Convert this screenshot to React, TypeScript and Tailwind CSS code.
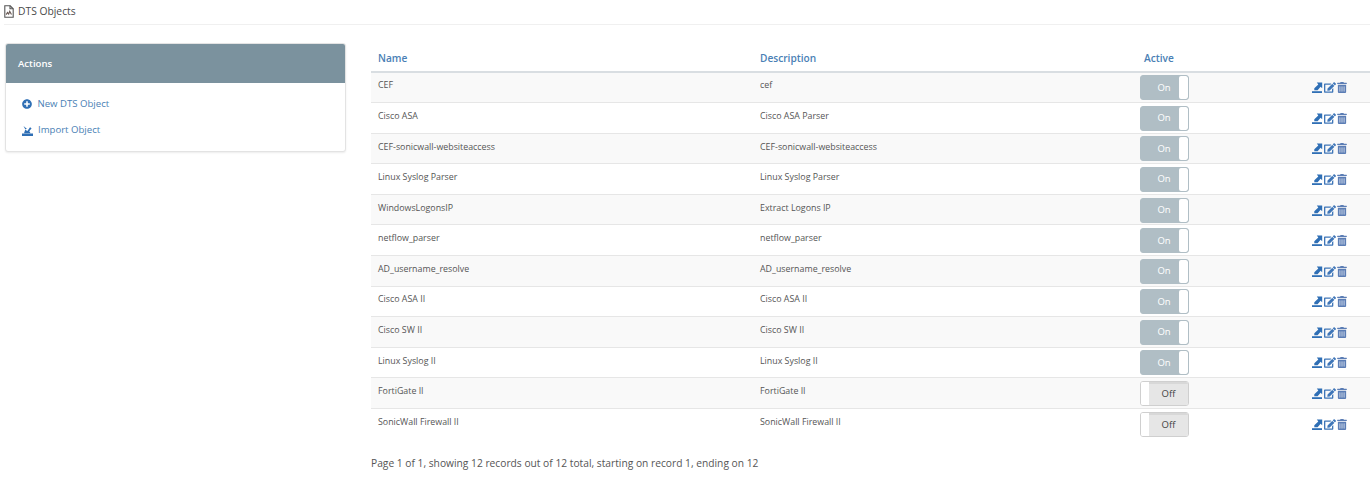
import React from "react";
import { FaPlusCircle, FaEdit, FaTrashAlt } from "react-icons/fa";

const rows: [string, string, boolean][] = [
  ["CEF", "cef", true],
  ["Cisco ASA", "Cisco ASA Parser", true],
  ["CEF-sonicwall-websiteaccess", "CEF-sonicwall-websiteaccess", true],
  ["Linux Syslog Parser", "Linux Syslog Parser", true],
  ["WindowsLogonsIP", "Extract Logons IP", true],
  ["netflow_parser", "netflow_parser", true],
  ["AD_username_resolve", "AD_username_resolve", true],
  ["Cisco ASA II", "Cisco ASA II", true],
  ["Cisco SW II", "Cisco SW II", true],
  ["Linux Syslog II", "Linux Syslog II", true],
  ["FortiGate II", "FortiGate II", false],
  ["SonicWall Firewall II", "SonicWall Firewall II", false],
];

function DocIcon() {
  return (
    <svg width="10" height="13" viewBox="0 0 10 13" fill="none" stroke="#555555" strokeWidth="1.1">
      <path d="M.8 .8h5.4L9.2 3.8V12.2H.8z" />
      <path d="M6 .8v3h3.2" />
      <path d="M2.2 9.6l1.3-2.200 1.200 1.600 1-2.600 1.800 3.200" stroke="#6a5a55" />
    </svg>
  );
}

function ExportIcon() {
  return (
    <svg width="11" height="11" viewBox="0 0 11 11" fill="#2f6fb5">
      <path d="M0 9.200h10V11H0z" />
      <path d="M4.800 .6h5.400v5.600L8.600 4.700 5.600 8.200H2.300V6.300L6.300 2.400z" />
    </svg>
  );
}

function ImportIcon() {
  return (
    <svg width="11" height="11" viewBox="0 0 11 11" fill="#2f6fb5">
      <path d="M0 8.600h11V11H0z" />
      <path d="M2 8.200 3.200 4.800 5.400 6 8 2.200 9.600 3.200 7.300 6.300 8.600 8.200z" />
      <path d="M1.500 1 4.800 3.700 3.400 4.400z" />
    </svg>
  );
}

function Toggle({ on }: { on: boolean }) {
  if (on) {
    return (
      <div className="flex w-[49px] h-[25px] rounded-[3px] border border-[#b0bec5] bg-[#b0bec5] overflow-hidden">
        <div className="flex-1 flex items-center justify-center pl-[8px] text-[9.5px] text-white">On</div>
        <div className="w-[9px] bg-white rounded-[2px]" />
      </div>
    );
  }
  return (
    <div className="flex w-[49px] h-[25px] rounded-[3px] border border-[#cfcfcf] bg-white overflow-hidden">
      <div className="w-[8px] bg-white" />
      <div className="flex-1 flex items-center justify-center bg-[#e6e6e6] border-t-2 border-[#d8d8d8] text-[9.5px] text-[#444444]">Off</div>
    </div>
  );
}

export default function App() {
  return (
    <div className="w-[1370px] h-[481px] bg-white overflow-hidden text-[#555555] font-['Open_Sans','Noto_Sans',sans-serif]">
      <div className="h-[25px] ml-[4px] flex items-center gap-[4px] pb-[1px] border-b border-[#f0f0f0]">
        <DocIcon />
        <span className="text-[10.3px] text-[#4a4a4a]">DTS Objects</span>
      </div>
      <div className="flex">
        <div className="w-[341px] ml-[5px] mt-[18px] h-[109px] rounded-[3px] border border-[#e3e3e3] shadow-[0_1px_2px_rgba(0,0,0,0.08)] bg-white overflow-hidden shrink-0">
          <div className="h-[39px] pt-[1px] bg-[#7b929e] flex items-center pl-[12px] text-[9.6px] text-white font-semibold">Actions</div>
          <div className="pt-[13px] pl-[16px] text-[9.6px] text-[#4a7fb5]">
            <div className="h-[16px] flex items-center gap-[5.5px]">
              <FaPlusCircle className="w-[10px] h-[10px] text-[#2f6fb5]" />
              <span>New DTS Object</span>
            </div>
            <div className="h-[16px] mt-[10.5px] flex items-center gap-[5px]">
              <ImportIcon />
              <span>Import Object</span>
            </div>
          </div>
        </div>
        <div className="ml-[25px] flex-1">
          <div className="h-[47.5px] pt-[21px] grid grid-cols-[382px_380px_172px_1fr] items-center border-b-2 border-[#d9dee2] text-[10.15px] font-semibold text-[#4a7fb5]">
            <div className="pl-[7px]">Name</div>
            <div className="pl-[7px]">Description</div>
            <div className="pl-[11px]">Active</div>
            <div />
          </div>
          {rows.map(([name, desc, on], i) => (
            <div
              key={i}
              className={`h-[30.58px] grid grid-cols-[382px_380px_172px_1fr] items-center border-b text-[8.85px] text-[#555555] ${i === rows.length - 1 ? "border-transparent" : "border-[#e6e6e6]"} ${i % 2 === 0 ? "bg-[#f9f9f9]" : "bg-white"}`}
            >
              <div className="pl-[7px] -mt-[2.5px]">{name}</div>
              <div className="pl-[7px] -mt-[2.5px]">{desc}</div>
              <div className="pl-[7px] mt-[1px]"><Toggle on={on} /></div>
              <div className="pl-[7px] mt-[1px] flex items-center gap-[1px]">
                <ExportIcon />
                <FaEdit className="w-[12px] h-[11px] text-[#3f76b8]" />
                <FaTrashAlt className="w-[10px] h-[11px] text-[#5b7db5]" />
              </div>
            </div>
          ))}
          <div className="pt-[16.5px] text-[10.24px] text-[#555555]">
            Page 1 of 1, showing 12 records out of 12 total, starting on record 1, ending on 12
          </div>
        </div>
      </div>
    </div>
  );
}
